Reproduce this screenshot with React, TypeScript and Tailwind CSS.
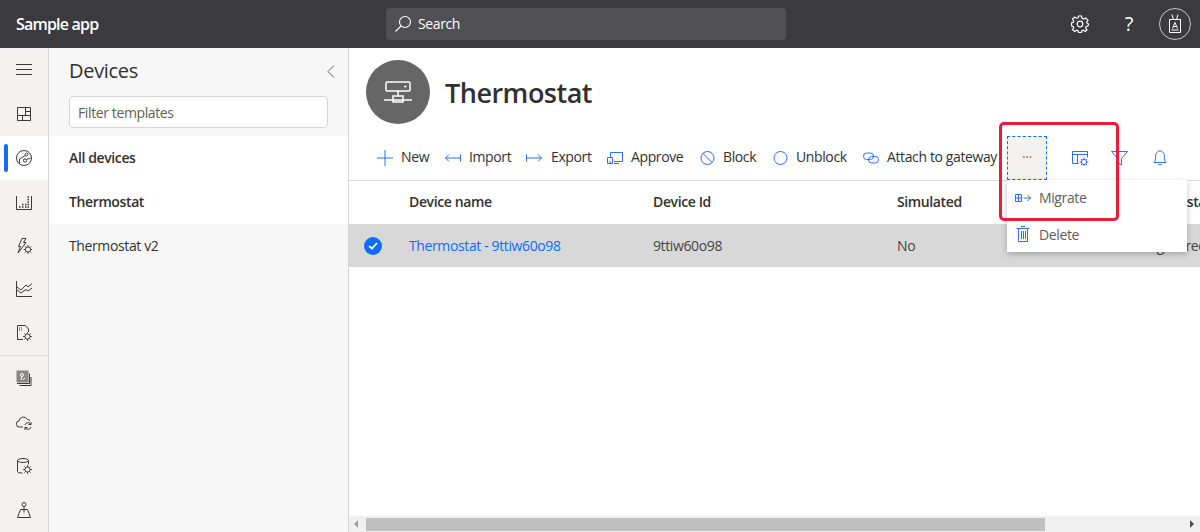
import React from 'react';

const Svg: React.FC<{ w?: number; h?: number; className?: string; children: React.ReactNode }> = ({ w = 16, h = 16, className = '', children }) => (
  <svg width={w} height={h} viewBox={`0 0 ${w} ${h}`} fill="none" stroke="currentColor" strokeWidth={1} className={`shrink-0 ${className}`}>
    {children}
  </svg>
);

const Gear: React.FC<{ cx: number; cy: number }> = ({ cx, cy }) => (
  <g>
    <circle cx={cx} cy={cy} r={2.6} />
    <path d={`M${cx} ${cy - 4.4}V${cy - 2.6}M${cx} ${cy + 2.6}V${cy + 4.4}M${cx - 4.4} ${cy}H${cx - 2.6}M${cx + 2.6} ${cy}H${cx + 4.4}M${cx - 3.1} ${cy - 3.1}L${cx - 1.9} ${cy - 1.9}M${cx + 1.9} ${cy + 1.9}L${cx + 3.1} ${cy + 3.1}M${cx + 3.1} ${cy - 3.1}L${cx + 1.9} ${cy - 1.9}M${cx - 1.9} ${cy + 1.9}L${cx - 3.1} ${cy + 3.1}`} />
  </g>
);

const railTop = [
  // dashboard
  <Svg key="a"><path d="M1.5 1.5h13v13h-13zM1.5 9.5h13M9.5 1.5v8M9.5 5.500h5M6.500 9.500v5" /></Svg>,
  // devices
  <Svg key="b"><circle cx="8" cy="8" r="7.500" /><circle cx="9" cy="10.500" r="1.600" /><circle cx="10.500" cy="4.500" r="1.400" /><path d="M3.500 13.500V9l5.800-3.500M10.500 9.500l4-1.500" /></Svg>,
  // analytics
  <Svg key="c"><path d="M.5 2v13.500h15V2" /><path d="M3 13h1.500M6 13h1.500M6 10.500h1.500M9 13h1.500M9 10.500h1.500M11.500 13H13M11.500 10.500H13M11.500 8H13M11.500 5.500H13M11.500 3H13" strokeWidth={1.4} /></Svg>,
  // rules
  <Svg key="d"><path d="M6 .5h4L7.500 4.500H10L2 15l2.500-6.500H2.500z" /><Gear cx={12} cy={11.500} /></Svg>,
  // chart
  <Svg key="e"><path d="M.5 0v15.500h16" /><path d="M1 9l4 3 5-3.500 2 1.500 4-3M1 6l4 3 5-5 2 2 4-3.500" /></Svg>,
  // jobs file
  <Svg key="f"><path d="M7 14.500H1.500V.5h8l3 3.500v3" /><path d="M3 3h4M3 5h4" strokeDasharray="1 1" /><Gear cx={11.500} cy={11.500} /></Svg>,
];

const railBottom = [
  <Svg key="g"><rect x="1" y="1" width="11" height="11" fill="#8a8886" stroke="#8a8886" /><path d="M3.500 15.500h11.500V7M1 13.500h12.500V3.500" /><circle cx="6" cy="5" r="1.500" stroke="#fff" /><path d="M6 6.500 5 10M9 8l-2 2" stroke="#fff" /></Svg>,
  <Svg key="h"><path d="M7 13H3.500a3 3 0 0 1-.5-6 4.500 4.500 0 0 1 8.500-1.500c1 0 2 .4 2.500 1" /><path d="M9 11a3 3 0 0 1 5-1.500l1 1M15 13a3 3 0 0 1-5 1.500l-1-1M15 8v2.500h-2.500M9 16v-2.500h2.500" /></Svg>,
  <Svg key="i"><ellipse cx="7" cy="2.500" rx="5.500" ry="2" /><path d="M1.500 2.500v11c0 1 1.500 1.500 5 1.500M12.500 2.500v4" /><Gear cx={11.500} cy={11.500} /></Svg>,
  <Svg key="j"><circle cx="8" cy="2.500" r="2" /><path d="M8 4.500v6M4.500 7.500h7l3 8h-13z" /></Svg>,
];

const toolbar: { label: string; width: string; gap: string; icon: React.ReactNode }[] = [
  { label: 'New', width: 'w-[68px]', gap: 'w-[24px]', icon: <Svg><path d="M8 0v16M0 8h16" /></Svg> },
  { label: 'Import', width: 'w-[81px]', gap: 'w-[24px]', icon: <Svg><path d="M.5 8h15M15.500 4.500v7M4 4.500.5 8 4 11.500" /></Svg> },
  { label: 'Export', width: 'w-[81px]', gap: 'w-[25px]', icon: <Svg><path d="M.5 4.500v7M.5 8h15M12 4.500 15.500 8 12 11.500" /></Svg> },
  { label: 'Approve', width: 'w-[93px]', gap: 'w-[24px]', icon: <Svg><path d="M3.500 7V2.500h12v9H7" /><path d="M.5 7.500h5v6h-5zM2 12h2M7 13.500h5" /></Svg> },
  { label: 'Block', width: 'w-[73px]', gap: 'w-[23px]', icon: <Svg><circle cx="7.500" cy="8" r="6.500" /><path d="m3 3.500 9 9" /></Svg> },
  { label: 'Unblock', width: 'w-[90px]', gap: 'w-[23px]', icon: <Svg><circle cx="7.500" cy="8" r="6.500" /></Svg> },
  { label: 'Attach to gateway', width: 'w-[144px]', gap: 'w-[24px]', icon: <Svg><rect x=".5" y="3" width="10" height="6.500" rx="3.200" /><rect x="5.500" y="6.500" width="10" height="6.500" rx="3.200" /></Svg> },
];

const columns = [
  { title: 'Device name', cell: 'Thermostat - 9ttiw60o98', link: true },
  { title: 'Device Id', cell: '9ttiw60o98', link: false },
  { title: 'Simulated', cell: 'No', link: false },
  { title: 'Device status', cell: 'Registered', link: false },
];

export default function App() {
  return (
    <div className="relative flex h-[532px] w-[1200px] flex-col overflow-hidden bg-white font-['Open_Sans','Noto_Sans',sans-serif] text-[14px] tracking-[-0.38px] text-[#323130]">
      {/* Top bar */}
      <header className="flex h-12 shrink-0 items-center bg-[#3b3a3f] text-white">
        <div className="w-[386px] pl-4 text-[16px] font-semibold tracking-[-0.8px]">Sample app</div>
        <div className="flex h-8 w-[400px] items-center rounded-sm bg-[#504f54] pl-2">
          <svg width="18" height="18" viewBox="0 0 18 18" fill="none" stroke="currentColor" strokeWidth={1.1}>
            <circle cx="11" cy="7" r="5.500" />
            <path d="M7 11 1.500 16.500" />
          </svg>
          <span className="ml-[6px] pb-[2px]">Search</span>
        </div>
        <div className="ml-auto flex items-center">
          <svg width="18" height="18" viewBox="0 0 18 18" fill="none" stroke="currentColor" strokeWidth={1.200} className="mr-[36px]">
            <circle cx="9" cy="9" r="2.800" />
            <path d="M7.500 1h3l.5 2.200 1.800.8L14.800 3 17 5.200 15.700 7l.4 1.200L17.500 9l-.4 1.800-1.900.6-.5 1.500L16 14.800 14.200 16.500 12.500 15.300l-1.700.7-.4 1.500H7.600L7.200 16l-1.700-.7L3.800 16.500 1.500 14.600l1.200-1.800-.6-1.400L.5 10.800V8l1.800-.7.4-1.300L1.500 4l2.200-2 1.800 1.200L7 2.700z" />
          </svg>
          <span className="mr-[26px] text-[20px] leading-none font-normal">?</span>
          <div className="mr-[9px] flex h-[32px] w-[32px] items-center justify-center rounded-full border border-[#c8c8c8]">
            <svg width="14" height="20" viewBox="0 0 14 20" fill="none" stroke="currentColor" strokeWidth={1}>
              <path d="M1.500 5.500h11v13h-11zM4 .5l1.500 5M10 .5 8.500 5.500" />
              <path d="M4.500 14.500 7 8.500l2.500 6M5.300 12.500h3.400M3.500 16h7" />
            </svg>
          </div>
        </div>
      </header>

      <div className="flex min-h-0 flex-1">
        {/* Icon rail */}
        <nav className="flex w-[49px] shrink-0 flex-col border-r border-[#d4d4d4] bg-[#f3f2f1] text-[#3b3a39]">
          <div className="flex h-11 items-center justify-center">
            <svg width="16" height="11" viewBox="0 0 16 11" stroke="currentColor"><path d="M0 .5h16M0 5.500h16M0 10.500h16" /></svg>
          </div>
          {railTop.map((icon, i) => (
            <div key={i} className={`relative flex h-11 items-center justify-center ${i === 1 ? 'bg-white' : ''}`}>
              {i === 1 && <span className="absolute top-2 left-1 h-7 w-1 rounded-sm bg-[#0f6cff]" />}
              {icon}
            </div>
          ))}
          <div className="h-px bg-[#dcdcdc]" />
          {railBottom.map((icon, i) => (
            <div key={i} className="flex h-11 items-center justify-center">{icon}</div>
          ))}
        </nav>

        {/* Devices panel */}
        <aside className="flex w-[300px] shrink-0 flex-col border-r border-[#d4d4d4] bg-[#f7f7f7]">
          <div className="flex h-[88px] shrink-0 flex-col px-5">
            <div className="flex h-[48px] items-center justify-between pb-[2px]">
              <h2 className="text-[20px] font-normal tracking-[-0.3px]">Devices</h2>
              <svg width="8" height="13" viewBox="0 0 8 13" fill="none" stroke="#605e5c" className="-mr-[7px]"><path d="M7 .5 1 6.500l6 6" /></svg>
            </div>
            <div className="flex h-8 w-[259px] items-center rounded-sm border border-[#d4d4d4] bg-white pl-2 text-[#605e5c]">Filter templates</div>
          </div>
          <div className="flex h-11 items-center bg-white pb-[2px] pl-5 font-semibold">All devices</div>
          <div className="flex h-11 items-center bg-white pb-[2px] pl-5 font-semibold">Thermostat</div>
          <div className="flex h-11 items-center pb-[2px] pl-5">Thermostat v2</div>
        </aside>

        {/* Main */}
        <main className="flex min-w-0 flex-1 flex-col">
          <div className="flex h-[88px] shrink-0 items-center pl-[17px]">
            <div className="flex h-16 w-16 items-center justify-center rounded-full bg-[#666666]">
              <svg width="28" height="22" viewBox="0 0 28 22" fill="none" stroke="#fff" strokeWidth={1.500}>
                <rect x="2" y="1" width="24" height="9" rx="1" />
                <path d="M20 5.500h2.500" />
                <path d="M14 10v5M9 19v-4h10v4M0 19h28" />
                <path d="M9 19v2h10v-2" />
              </svg>
            </div>
            <h1 className="ml-[15px] pt-[3px] text-[27px] font-semibold tracking-[-0.5px]">Thermostat</h1>
          </div>

          <div className="flex h-[45px] shrink-0 items-center border-b border-[#d8d8d8] pl-7">
            {toolbar.map(item => (
              <div key={item.label} className={`flex items-center ${item.width}`}>
                <span className={`flex text-[#2f6bff] ${item.gap}`}>{item.icon}</span>
                <span className="pb-[3px] whitespace-nowrap">{item.label}</span>
              </div>
            ))}
            <div className="h-11 w-10 shrink-0" />
            <div className="flex items-center text-[#2f6bff]">
              <Svg w={18} h={16} className="ml-[24px]"><path d="M7.500 13.500h-6v-12h15v6M1.500 4.500h15M6.500 4.500v9" /><Gear cx={13} cy={12} /></Svg>
              <Svg w={18} h={16} className="ml-[22px]"><path d="M.5 1.500h16l-6 7v6.500l-4-2.500v-4z" /></Svg>
              <Svg w={14} h={16} className="ml-[24px]"><path d="M1 12.500h12c-1.500-1.500-1.500-3-1.500-5C11.500 3 9.500 1 7 1S2.500 3 2.500 7.500c0 2-.1 3.500-1.500 5zM5.500 14.500h3" /></Svg>
            </div>
          </div>

          {/* Table */}
          <div className="grid shrink-0 grid-cols-[60px_244px_244px_244px_1fr] overflow-hidden whitespace-nowrap">
            <div className="h-[43px]" />
            {columns.map(col => (
              <div key={col.title} className="flex h-[43px] items-center pb-[2px] font-semibold">{col.title}</div>
            ))}
            <div className="flex h-[43px] items-center bg-[#d8d8d8] pl-[15px]">
              <span className="flex h-[18px] w-[18px] items-center justify-center rounded-full bg-[#0f6cff]">
                <svg width="10" height="8" viewBox="0 0 10 8" fill="none" stroke="#fff" strokeWidth={1.800}><path d="m1 4 3 2.500L9 1" /></svg>
              </span>
            </div>
            {columns.map(col => (
              <div key={col.title} className={`flex h-[43px] items-center bg-[#d8d8d8] ${col.link ? 'text-[#0f6cff]' : 'text-[#484644]'}`}>{col.cell}</div>
            ))}
          </div>

          {/* Horizontal scrollbar */}
          <div className="mt-auto flex h-4 shrink-0 items-center bg-[#f0f0f0] pr-[6px] pl-[5px]">
            <span className="h-0 w-0 border-y-[4px] border-r-[4px] border-y-transparent border-r-[#a0a0a0]" />
            <span className="ml-[8px] h-[13px] w-[679px] shrink-0 bg-[#bfbfbf]" />
            <span className="ml-auto h-0 w-0 border-y-[4px] border-l-[4px] border-y-transparent border-l-[#505050]" />
          </div>
        </main>
      </div>

      {/* Open overflow button and its menu */}
      <div className="absolute top-[136px] left-[1007px] flex h-11 w-10 items-center justify-center border border-dashed border-[#0f6cff] bg-[#f3f2f1] text-[#a0714f]">
        <span className="mb-[3px] leading-none">···</span>
      </div>
      <div className="absolute top-[180px] left-[1007px] w-[180px] bg-white shadow-[0_2px_6px_rgba(0,0,0,0.25)]">
        <div className="flex h-9 items-center pl-2 text-[#605e5c]">
          <svg width="16" height="10" viewBox="0 0 16 10" fill="none" stroke="#2f6bff"><path d="M.5 1.500h6v7h-6zM3.500 1.500v7M.5 5h6M8.500 5h7M12.500 2l3 3-3 3" /></svg>
          <span className="ml-[8px] pb-[2px]">Migrate</span>
        </div>
        <div className="flex h-9 items-center pl-[9px] text-[#605e5c]">
          <svg width="14" height="16" viewBox="0 0 14 16" fill="none" stroke="#2f6bff"><path d="M.5 2.500h13M2.500 2.500v13h9v-13M5 .5h4M5.500 5v8M7.500 5v8M9.500 5v8" /></svg>
          <span className="ml-[9px]">Delete</span>
        </div>
      </div>

      {/* Red highlight annotation */}
      <div className="pointer-events-none absolute top-[122px] left-[999px] h-[99px] w-[120px] rounded-[5px] border-[3px] border-[#ed1c3c]" />
    </div>
  );
}
